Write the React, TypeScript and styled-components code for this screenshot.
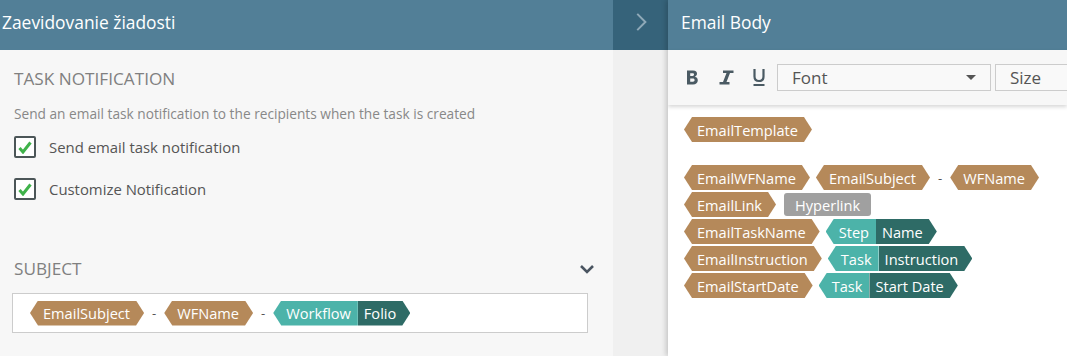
import React from "react";
import styled, { createGlobalStyle } from "styled-components";

const GlobalStyle = createGlobalStyle`
    html, body {
        margin: 0;
        padding: 0;
        overflow: hidden;
    }
    body {
        font-family: "Open Sans", "Noto Sans", sans-serif;
        background: #f7f7f7;
    }
`;

const colors = {
    header: "#527f97",
    headerDark: "#36637a",
    brown: "#b5895a",
    teal: "#4cb3a9",
    tealDark: "#2e6b66",
    gray: "#a0a0a0",
};

const Page = styled.div`
    display: flex;
    width: 1067px;
    height: 356px;
    overflow: hidden;
`;

const LeftPanel = styled.div`
    width: 613px;
    flex-shrink: 0;
    display: flex;
    flex-direction: column;
    background: #f7f7f7;
`;

const Strip = styled.div`
    width: 55px;
    flex-shrink: 0;
    display: flex;
    flex-direction: column;
    background: #f0f0f0;
`;

const RightPanel = styled.div`
    flex: 1;
    min-width: 0;
    display: flex;
    flex-direction: column;
    background: #fff;
    box-shadow: -2px 0 5px rgba(0, 0, 0, 0.18);
    position: relative;
    z-index: 1;
    overflow: hidden;
`;

const Header = styled.div<{ dark?: boolean; indent: number }>`
    height: 50px;
    flex-shrink: 0;
    display: flex;
    align-items: center;
    padding: 0 0 6px ${({ indent }) => indent}px;
    box-sizing: border-box;
    background: ${({ dark }) => (dark ? colors.headerDark : colors.header)};
    color: #fff;
    font-size: 17.4px;
    white-space: nowrap;
`;

const StripHeader = styled(Header)`
    justify-content: center;
    padding-left: 0;
`;

const LeftBody = styled.div`
    padding: 17px 14px 0 14px;
    display: flex;
    flex-direction: column;
`;

const SectionTitle = styled.div`
    font-size: 17.2px;
    color: #808080;
    line-height: 24px;
`;

const Description = styled.div`
    font-size: 13.7px;
    color: #888;
    line-height: 18px;
    margin-top: 14px;
`;

const CheckRow = styled.label`
    display: flex;
    align-items: center;
    gap: 13px;
    height: 24px;
    font-size: 14.9px;
    color: #555;
    margin-top: 12px;

    & + & {
        margin-top: 18px;
    }
`;

const CheckBox = styled.span`
    width: 22px;
    height: 22px;
    box-sizing: border-box;
    border: 2px solid #4c5658;
    border-radius: 2px;
    background: #fff;
    display: flex;
    align-items: center;
    justify-content: center;
`;

const SubjectHead = styled.div`
    display: flex;
    align-items: center;
    justify-content: space-between;
    margin-top: 56px;
    padding-right: 4px;
`;

const SubjectBox = styled.div`
    margin: 12px 11px 0 -2px;
    height: 40px;
    box-sizing: border-box;
    border: 1px solid #ccc;
    background: #fff;
    display: flex;
    align-items: center;
    padding-left: 17px;
    gap: 6px;
`;

const Toolbar = styled.div`
    height: 55px;
    flex-shrink: 0;
    background: #f7f7f7;
    box-shadow: 0 2px 4px rgba(0, 0, 0, 0.16);
    display: flex;
    align-items: center;
    padding: 0 0 0 18px;
    position: relative;
`;

const ToolButton = styled.span<{ w: number }>`
    width: ${({ w }) => w}px;
    flex-shrink: 0;
    display: flex;
    justify-content: flex-start;
    align-items: center;
    color: #4a5a63;
`;

const Select = styled.div<{ w: number }>`
    width: ${({ w }) => w}px;
    flex-shrink: 0;
    height: 27px;
    box-sizing: border-box;
    border: 1px solid #ccc;
    background: #f9f9f9;
    display: flex;
    align-items: center;
    justify-content: space-between;
    padding: 0 14px 0 14px;
    font-size: 17px;
    color: #555;
    margin-right: 4px;
`;

const Caret = styled.span`
    width: 0;
    height: 0;
    border-left: 5px solid transparent;
    border-right: 5px solid transparent;
    border-top: 5px solid #555;
`;

const Content = styled.div`
    padding: 11px 0 0 16px;
    display: flex;
    flex-direction: column;
`;

const TagRow = styled.div<{ spaced?: boolean }>`
    display: flex;
    align-items: center;
    height: 27px;
    gap: 6px;
    margin-bottom: ${({ spaced }) => (spaced ? "21px" : "0")};
`;

const Tag = styled.span<{ bg: string; left?: boolean; right?: boolean }>`
    height: 25px;
    display: inline-flex;
    align-items: center;
    padding: 0 ${({ right }) => (right ? 14 : 7)}px 0 ${({ left }) => (left ? 13 : 6)}px;
    background: ${({ bg }) => bg};
    color: #fff;
    font-size: 14.6px;
    white-space: nowrap;
    clip-path: polygon(
        ${({ left }) => (left ? "8px 0" : "0 0")},
        ${({ right }) => (right ? "calc(100% - 8px) 0, 100% 50%, calc(100% - 8px) 100%" : "100% 0, 100% 100%")},
        ${({ left }) => (left ? "8px 100%, 0 50%" : "0 100%")}
    );
`;

const Pill = styled.span`
    height: 23px;
    display: inline-flex;
    align-items: center;
    padding: 0 11px;
    margin-left: 2px;
    background: ${colors.gray};
    border-radius: 3px;
    color: #fff;
    font-size: 14.6px;
`;

const Compound = styled.span`
    display: inline-flex;
`;

const Dash = styled.span`
    font-size: 13px;
    color: #555;
    padding: 0 2px;
`;

const Field = ({ children }: { children: string }) => (
    <Tag bg={colors.brown} left right>
        {children}
    </Tag>
);

const Ref = ({ a, b }: { a: string; b: string }) => (
    <Compound>
        <Tag bg={colors.teal} left>
            {a}
        </Tag>
        <Tag bg={colors.tealDark} right>
            {b}
        </Tag>
    </Compound>
);

const Check = () => (
    <svg width="14" height="13" viewBox="0 0 14 13">
        <path d="M1.5 7 L5 11 L12.5 1.5" fill="none" stroke="#3fb24a" strokeWidth="3" />
    </svg>
);

const Chevron = ({ dir, color, size }: { dir: "down" | "right"; color: string; size: number }) => (
    <svg width={size} height={size} viewBox="0 0 16 16">
        {dir === "down" ? (
            <path d="M2 5 L8 11 L14 5" fill="none" stroke={color} strokeWidth="2.6" />
        ) : (
            <path d="M5 1.5 L11.5 8 L5 14.5" fill="none" stroke={color} strokeWidth="1.6" />
        )}
    </svg>
);

const App = () => {
    return (
        <Page>
            <GlobalStyle />
            <LeftPanel>
                <Header indent={2}>Zaevidovanie žiadosti</Header>
                <LeftBody>
                    <SectionTitle>TASK NOTIFICATION</SectionTitle>
                    <Description>
                        Send an email task notification to the recipients when the task is created
                    </Description>
                    <CheckRow>
                        <CheckBox>
                            <Check />
                        </CheckBox>
                        Send email task notification
                    </CheckRow>
                    <CheckRow>
                        <CheckBox>
                            <Check />
                        </CheckBox>
                        Customize Notification
                    </CheckRow>
                    <SubjectHead>
                        <SectionTitle>SUBJECT</SectionTitle>
                        <Chevron dir="down" color="#4a5561" size={16} />
                    </SubjectHead>
                    <SubjectBox>
                        <Field>EmailSubject</Field>
                        <Dash>-</Dash>
                        <Field>WFName</Field>
                        <Dash>-</Dash>
                        <Ref a="Workflow" b="Folio" />
                    </SubjectBox>
                </LeftBody>
            </LeftPanel>
            <Strip>
                <StripHeader dark indent={0}>
                    <Chevron dir="right" color="#8fa9b8" size={20} />
                </StripHeader>
            </Strip>
            <RightPanel>
                <Header indent={13}>Email Body</Header>
                <Toolbar>
                    <ToolButton w={33}>
                        <svg width="13" height="17" viewBox="0 0 13 17">
                            <path
                                d="M1 1.5 H7 C10 1.5 11 3 11 4.8 C11 6.3 10 7.3 8.8 7.7 C10.6 8 11.8 9.2 11.8 11.2 C11.8 13.8 10 15.5 7 15.5 H1 Z M4.2 4.2 V7 H6.6 C7.6 7 8 6.4 8 5.6 C8 4.7 7.5 4.2 6.6 4.2 Z M4.2 9.4 V12.8 H6.9 C8 12.8 8.6 12.2 8.6 11.1 C8.6 10 8 9.4 6.9 9.4 Z"
                                fill="currentColor"
                                fillRule="evenodd"
                            />
                        </svg>
                    </ToolButton>
                    <ToolButton w={33}>
                        <svg width="15" height="17" viewBox="0 0 15 17">
                            <path
                                d="M4 1.5 H14.5 V4 H11 L7.5 13 H10.5 V15.5 H0.5 V13 H4 L7.5 4 H4 Z"
                                fill="currentColor"
                            />
                        </svg>
                    </ToolButton>
                    <ToolButton w={25}>
                        <svg width="14" height="19" viewBox="0 0 14 19">
                            <path
                                d="M2.5 1 V8.5 C2.5 11.3 4.3 13 7 13 C9.7 13 11.5 11.3 11.5 8.5 V1"
                                fill="none"
                                stroke="currentColor"
                                strokeWidth="2.2"
                            />
                            <rect x="1.5" y="16" width="11" height="2" fill="currentColor" />
                        </svg>
                    </ToolButton>
                    <Select w={214}>
                        Font
                        <Caret />
                    </Select>
                    <Select w={120}>Size</Select>
                </Toolbar>
                <Content>
                    <TagRow spaced>
                        <Field>EmailTemplate</Field>
                    </TagRow>
                    <TagRow>
                        <Field>EmailWFName</Field>
                        <Field>EmailSubject</Field>
                        <Dash>-</Dash>
                        <Field>WFName</Field>
                    </TagRow>
                    <TagRow>
                        <Field>EmailLink</Field>
                        <Pill>Hyperlink</Pill>
                    </TagRow>
                    <TagRow>
                        <Field>EmailTaskName</Field>
                        <Ref a="Step" b="Name" />
                    </TagRow>
                    <TagRow>
                        <Field>EmailInstruction</Field>
                        <Ref a="Task" b="Instruction" />
                    </TagRow>
                    <TagRow>
                        <Field>EmailStartDate</Field>
                        <Ref a="Task" b="Start Date" />
                    </TagRow>
                </Content>
            </RightPanel>
        </Page>
    );
};

export default App;
